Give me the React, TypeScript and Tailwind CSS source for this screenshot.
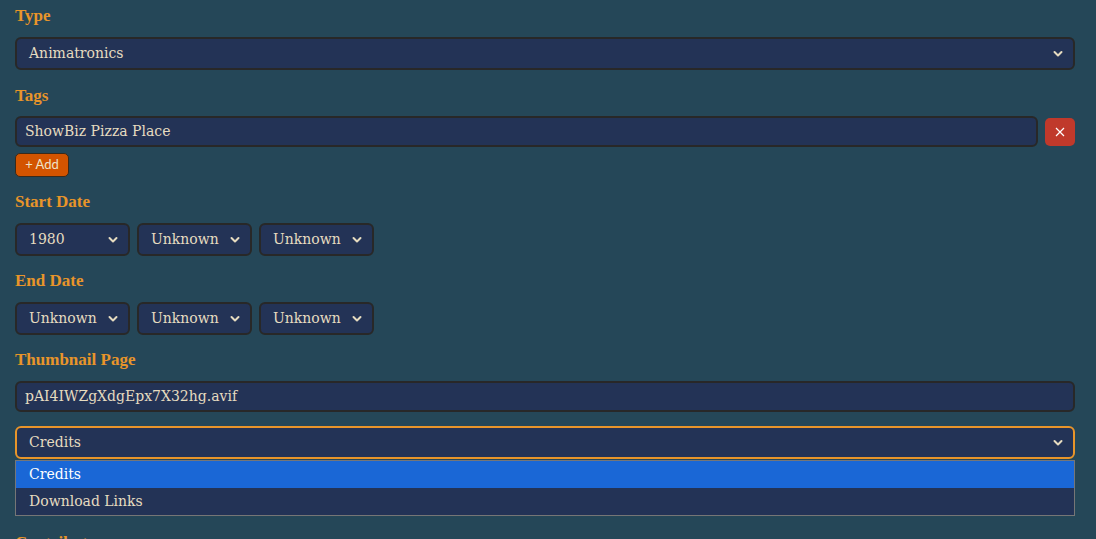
import React from "react";

const serif = "font-['DejaVu_Serif',serif]";

function Chevron() {
  return (
    <svg width="10" height="7" viewBox="0 0 10 7" className="absolute right-[10px] top-1/2 -translate-y-1/2 pointer-events-none">
      <path d="M1.5 1.5 L5 5 L8.5 1.5" fill="none" stroke="#e6dcc0" strokeWidth="2" strokeLinecap="round" strokeLinejoin="round" />
    </svg>
  );
}

function Label({ children, className = "" }: { children: React.ReactNode; className?: string }) {
  return (
    <div className={`text-[17px] leading-[20px] font-bold text-[#e8952a] font-['Liberation_Serif',serif] ${className}`}>{children}</div>
  );
}

function SelectBox({ value, className = "", focused = false }: { value: string; className?: string; focused?: boolean }) {
  return (
    <div
      className={`relative h-[33px] rounded-[6px] border-2 ${focused ? "border-[#e8952a]" : "border-[#282828]"} bg-[#233356] flex items-center pl-[12px] text-[14px] text-[#e6dcc0] ${serif} ${className}`}
    >
      <span>{value}</span>
      <Chevron />
    </div>
  );
}

function TextBox({ value, className = "" }: { value: string; className?: string }) {
  return (
    <div className={`h-[31px] rounded-[6px] border-2 border-[#282828] bg-[#233356] flex items-center pl-[8px] text-[14px] text-[#e6dcc0] ${serif} ${className}`}>
      {value}
    </div>
  );
}

function DateRow({ values }: { values: string[] }) {
  return (
    <div className="flex gap-[7px]">
      {values.map((v, i) => (
        <SelectBox key={i} value={v} className="w-[115px]" />
      ))}
    </div>
  );
}

export default function App() {
  return (
    <div className="w-[1096px] h-[539px] overflow-hidden bg-[#254758] pl-[15px] pr-[21px] pt-[6px]">
      <Label>Type</Label>
      <SelectBox value="Animatronics" className="mt-[11px]" />

      <Label className="mt-[16px]">Tags</Label>
      <div className="mt-[10px] flex items-center gap-[7px]">
        <TextBox value="ShowBiz Pizza Place" className="flex-1" />
        <button className="w-[30px] h-[28px] rounded-[5px] bg-[#c0392b] flex items-center justify-center">
          <svg width="10" height="10" viewBox="0 0 10 10">
            <path d="M1 1 L9 9 M9 1 L1 9" stroke="#ffffff" strokeWidth="1.2" />
          </svg>
        </button>
      </div>
      <button className="mt-[6px] h-[24px] w-[54px] rounded-[5px] border border-[#3a2a1a] bg-[#d35400] text-[13px] text-[#efe3c8] font-['Lato',sans-serif] flex items-center justify-center">
        + Add
      </button>

      <Label className="mt-[15px]">Start Date</Label>
      <div className="mt-[11px]">
        <DateRow values={["1980", "Unknown", "Unknown"]} />
      </div>

      <Label className="mt-[15px]">End Date</Label>
      <div className="mt-[11px]">
        <DateRow values={["Unknown", "Unknown", "Unknown"]} />
      </div>

      <Label className="mt-[15px]">Thumbnail Page</Label>
      <TextBox value="pAI4IWZgXdgEpx7X32hg.avif" className="mt-[11px]" />

      <SelectBox value="Credits" focused className="mt-[14px]" />
      <div className={`mt-[1px] border border-[#767676] bg-[#233356] text-[14px] ${serif}`}>
        <div className="h-[27px] bg-[#1a67d6] text-white flex items-center pl-[13px]">Credits</div>
        <div className="h-[27px] text-[#e6dcc0] flex items-center pl-[13px]">Download Links</div>
      </div>

      <Label className="mt-[17px]">Contributors</Label>
    </div>
  );
}
